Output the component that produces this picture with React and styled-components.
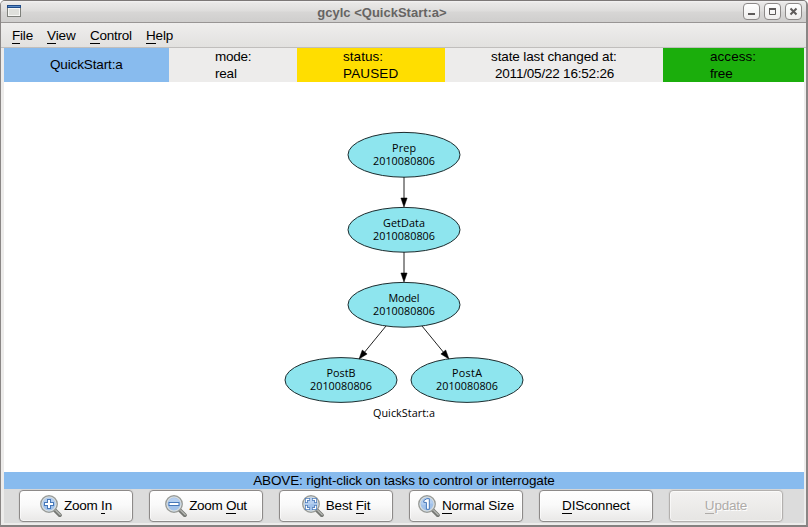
import React from 'react';
import styled, { createGlobalStyle, css } from 'styled-components';

const GlobalStyle = createGlobalStyle`
  html, body { margin: 0; padding: 0; background: #fff; }
  * { box-sizing: border-box; }
`;

const Window = styled.div`
  width: 808px;
  height: 527px;
  display: flex;
  flex-direction: column;
  overflow: hidden;
  background: #edeceb;
  border: 1px solid #8a8685;
  border-top-color: #7c7877;
  border-right: 2px solid #8a8685;
  border-bottom: 2px solid #858180;
  border-radius: 5px 5px 0 0;
  font-family: "Liberation Sans", Arial, sans-serif;
  font-size: 13.5px;
  color: #000;
`;

const TitleBar = styled.header`
  flex: none;
  height: 22px;
  display: flex;
  align-items: flex-start;
  padding: 1px 4px 0 6px;
  background: linear-gradient(#f4f3f3 0, #e9e8e7 2px, #dedddc 10px, #d7d6d5 11px, #cfcecd 100%);
  border-bottom: 1px solid #989594;
  > svg { margin-top: 3px; }
`;

const Title = styled.h1`
  flex: 1;
  margin: 0;
  padding-top: 3px;
  text-align: center;
  font-size: 13px;
  line-height: 16px;
  font-weight: bold;
  color: #666463;
`;

const Controls = styled.div`
  display: flex;
  gap: 4px;
  padding-top: 1px;
`;

const ControlButton = styled.button`
  width: 17px;
  height: 17px;
  padding: 0;
  display: grid;
  place-items: center;
  border: 1px solid #8c8988;
  border-radius: 4px;
  background: linear-gradient(#ffffff, #efeeed);
  svg { display: block; }
`;

const MenuBar = styled.nav`
  flex: none;
  height: 25px;
  display: flex;
  gap: 14px;
  padding: 4px 0 0 11px;
  line-height: 17px;
  background: linear-gradient(#efeeed, #e2e1df);
  border-bottom: 1px solid #c0bebc;
`;

const MenuItem = styled.span`
  width: ${p => p.$w}px;
  white-space: nowrap;
  letter-spacing: ${p => p.$ls || 0}px;
`;

const Mnemonic = styled.span`
  border-bottom: 1px solid currentColor;
  display: inline-block;
  line-height: 14px;
`;

const Body = styled.main`
  flex: 1;
  display: flex;
  flex-direction: column;
  margin: 0 2px 2px 3px;
`;

const InfoBar = styled.div`
  flex: none;
  height: 34px;
  display: grid;
  grid-template-columns: 165px 128px 148px 218px 141px;
`;

const InfoCell = styled.div`
  display: flex;
  flex-direction: column;
  align-items: center;
  justify-content: center;
  padding-bottom: ${p => (p.$single ? 1 : 0)}px;
  background: ${p => p.$bg};
  line-height: 17px;
`;

const InfoBlock = styled.div`
  width: ${p => p.$w}px;
  white-space: nowrap;
`;

const InfoLine = styled.div`
  letter-spacing: ${p => p.$ls || 0}px;
  padding-left: ${p => p.$indent || 0}px;
`;

const Canvas = styled.section`
  flex: none;
  height: 390px;
  background: #fff;
  svg { display: block; }
`;

const Hint = styled.div`
  flex: none;
  height: 17px;
  line-height: 17px;
  text-align: center;
  letter-spacing: -0.13px;
  background: #88bbee;
`;

const ButtonBar = styled.footer`
  flex: none;
  height: 34px;
  display: flex;
  gap: 16px;
  padding: 1px 15px;
  background: #dcdcdc;
`;

const ToolButton = styled.button`
  width: 114px;
  height: 32px;
  flex: none;
  display: flex;
  align-items: center;
  justify-content: center;
  gap: 2px;
  padding: 0;
  font: inherit;
  color: #000;
  border: 1px solid #8d8a89;
  border-radius: 4px;
  background: linear-gradient(#ffffff, #fafafa 45%, #e9e8e7);
  box-shadow: inset 0 0 0 1px rgba(255, 255, 255, 0.6), 0 0 0 1px rgba(0, 0, 0, 0.03);
  svg { flex: none; display: block; }
  ${p => p.disabled && css`
    color: #aeaba8;
    text-shadow: 1px 1px 0 #fff;
    border-color: #b3b0ae;
    background: linear-gradient(#f3f2f1, #e6e5e3);
  `}
`;

const ButtonLabel = styled.span`
  white-space: nowrap;
  line-height: 16px;
  letter-spacing: ${p => p.$ls || 0}px;
`;

const NodeShape = styled.ellipse`
  fill: #8ee5ee;
  stroke: #1c2b2d;
  stroke-width: 1;
`;

const GraphText = styled.text`
  font-family: "Open Sans", "Noto Sans", sans-serif;
  font-size: 10.8px;
  text-anchor: middle;
  fill: #000;
`;

const nodes = [
  { name: 'Prep', x: 404, y: 154.8, w: 24 },
  { name: 'GetData', x: 404, y: 229.8, w: 42 },
  { name: 'Model', x: 404, y: 304.8, w: 31 },
  { name: 'PostB', x: 341, y: 380, w: 29 },
  { name: 'PostA', x: 467, y: 380, w: 30 },
];

const edges = [
  [404, 177, 404, 207],
  [404, 252, 404, 282],
  [386, 326, 359, 359],
  [422, 326, 449, 359],
];

function Edge({ points: [x1, y1, x2, y2] }) {
  const len = Math.hypot(x2 - x1, y2 - y1);
  const ux = (x2 - x1) / len;
  const uy = (y2 - y1) / len;
  const bx = x2 - ux * 9;
  const by = y2 - uy * 9;
  const head = `${x2},${y2} ${bx - uy * 3.1},${by + ux * 3.1} ${bx + uy * 3.1},${by - ux * 3.1}`;
  return (
    <g>
      <line x1={x1} y1={y1} x2={bx} y2={by} stroke="#222" strokeWidth="1" />
      <polygon points={head} fill="#000" stroke="#000" strokeWidth="0.5" />
    </g>
  );
}

function Graph() {
  return (
    <svg width="800" height="390" viewBox="4 82 800 390">
      {nodes.map(n => (
        <g key={n.name}>
          <NodeShape cx={n.x} cy={n.y} rx="56" ry="22.4" />
          <GraphText x={n.x} y={n.y - 2.8} textLength={n.w}>{n.name}</GraphText>
          <GraphText x={n.x} y={n.y + 10.2} textLength="62">2010080806</GraphText>
        </g>
      ))}
      {edges.map(e => <Edge key={e.join()} points={e} />)}
      <GraphText x="404" y="417" textLength="62">QuickStart:a</GraphText>
    </svg>
  );
}

const lensMarks = {
  in: (
    <g>
      <path d="M9 4v10M4 9h10" stroke="#4677b8" strokeWidth="4" />
      <path d="M9 5v8M5 9h8" stroke="#fff" strokeWidth="2" />
    </g>
  ),
  out: (
    <g>
      <path d="M3.5 9h11" stroke="#4677b8" strokeWidth="4" />
      <path d="M4.5 9h9" stroke="#fff" strokeWidth="2" />
    </g>
  ),
  fit: (
    <g>
      <path d="M4.4 8V4.4H8M10 4.4h3.6V8M13.6 10v3.6H10M8 13.6H4.4V10" stroke="#4677b8" strokeWidth="2.8" />
      <path d="M4.4 7.3V4.4h2.9M10.7 4.4h2.9v2.9M13.6 10.7v2.9h-2.9M7.3 13.6H4.4v-2.9" stroke="#fff" strokeWidth="1.3" />
    </g>
  ),
  one: (
    <path d="M5.8 5.6L8.8 3.7h2.5v10.6H8.4V7.4H5.8z" fill="#fff" stroke="#4677b8" strokeWidth="1" />
  ),
};

function Lens({ kind }) {
  return (
    <svg width="22" height="22" viewBox="0 0 22 22" fill="none">
      <path d="M15 15.4L19.8 20.2" stroke="#747672" strokeWidth="4" strokeLinecap="round" />
      <path d="M15.8 15.4L20.2 19.8" stroke="#b4b6b2" strokeWidth="1.4" strokeLinecap="round" />
      <circle cx="9" cy="9" r="8.2" fill="#a2c2ea" stroke="#9a9c98" strokeWidth="1.5" />
      <circle cx="9" cy="9" r="7" stroke="#dcdfdc" strokeWidth="1.1" />
      <path d="M3 9a6 6 0 0 1 12 0c-3-1.6-8 2.5-12 0z" fill="#b5cff0" />
      {lensMarks[kind]}
    </svg>
  );
}

function WindowIcon() {
  return (
    <svg width="14" height="12" viewBox="0 0 14 12">
      <rect x="0.5" y="0.5" width="13" height="11" fill="#dfe0dc" stroke="#7e807b" />
      <rect x="1.5" y="3.5" width="11" height="7" fill="none" stroke="#f6f6f4" />
      <rect width="14" height="3" fill="#204a87" />
      <rect x="1" y="1" width="12" height="1" fill="#5b8cc8" />
    </svg>
  );
}

const menus = [
  { text: 'File', w: 21, ls: -0.2 },
  { text: 'View', w: 29, ls: -0.2 },
  { text: 'Control', w: 42, ls: -0.25 },
  { text: 'Help', w: 28, ls: -0.15 },
];

const info = [
  { bg: '#88bbee', w: 73, lines: [{ text: 'QuickStart:a', ls: -0.13 }] },
  { bg: '#edeceb', w: 36, lines: [{ text: 'mode:', ls: -0.25 }, { text: 'real', ls: -0.2 }] },
  { bg: '#ffde00', w: 56, lines: [{ text: 'status:', ls: 0.05 }, { text: 'PAUSED', ls: 0.15 }] },
  { bg: '#edeceb', w: 126, lines: [{ text: 'state last changed at:', ls: -0.12 }, { text: '2011/05/22 16:52:26', indent: 4, ls: -0.2 }] },
  { bg: '#1bae0c', w: 47, lines: [{ text: 'access:', ls: 0.05 }, { text: 'free', ls: -0.2 }] },
];

const buttons = [
  { icon: 'in', pre: 'Zoom ', key: 'I', post: 'n', ls: -0.25 },
  { icon: 'out', pre: 'Zoom ', key: 'O', post: 'ut', ls: -0.3 },
  { icon: 'fit', pre: 'Best ', key: 'F', post: 'it', ls: -0.15 },
  { icon: 'one', pre: '', key: 'N', post: 'ormal Size', ls: -0.12 },
  { pre: '', key: 'D', post: 'ISconnect', ls: -0.2 },
  { pre: '', key: 'U', post: 'pdate', ls: -0.2, disabled: true },
];

export default function App() {
  return (
    <>
      <GlobalStyle />
      <Window>
        <TitleBar>
          <WindowIcon />
          <Title>gcylc &lt;QuickStart:a&gt;</Title>
          <Controls>
            <ControlButton aria-label="Minimize">
              <svg width="9" height="9"><path d="M1 7h7" stroke="#5e5b5a" strokeWidth="2" /></svg>
            </ControlButton>
            <ControlButton aria-label="Maximize">
              <svg width="9" height="9" fill="none"><path d="M1.5 2v5.5h6V2" stroke="#5e5b5a" /><path d="M1 2h7" stroke="#5e5b5a" strokeWidth="2" /></svg>
            </ControlButton>
            <ControlButton aria-label="Close">
              <svg width="9" height="9"><path d="M1.5 1.5l6 6M7.5 1.5l-6 6" stroke="#5e5b5a" strokeWidth="2" /></svg>
            </ControlButton>
          </Controls>
        </TitleBar>
        <MenuBar>
          {menus.map(m => (
            <MenuItem key={m.text} $w={m.w} $ls={m.ls}>
              <Mnemonic>{m.text[0]}</Mnemonic>{m.text.slice(1)}
            </MenuItem>
          ))}
        </MenuBar>
        <Body>
          <InfoBar>
            {info.map(c => (
              <InfoCell key={c.lines[0].text} $bg={c.bg} $single={c.lines.length === 1}>
                <InfoBlock $w={c.w}>
                  {c.lines.map(l => (
                    <InfoLine key={l.text} $ls={l.ls} $indent={l.indent}>{l.text}</InfoLine>
                  ))}
                </InfoBlock>
              </InfoCell>
            ))}
          </InfoBar>
          <Canvas><Graph /></Canvas>
          <Hint>ABOVE: right-click on tasks to control or interrogate</Hint>
          <ButtonBar>
            {buttons.map(b => (
              <ToolButton key={b.key + b.post} disabled={b.disabled}>
                {b.icon && <Lens kind={b.icon} />}
                <ButtonLabel $ls={b.ls}>{b.pre}<Mnemonic>{b.key}</Mnemonic>{b.post}</ButtonLabel>
              </ToolButton>
            ))}
          </ButtonBar>
        </Body>
      </Window>
    </>
  );
}
